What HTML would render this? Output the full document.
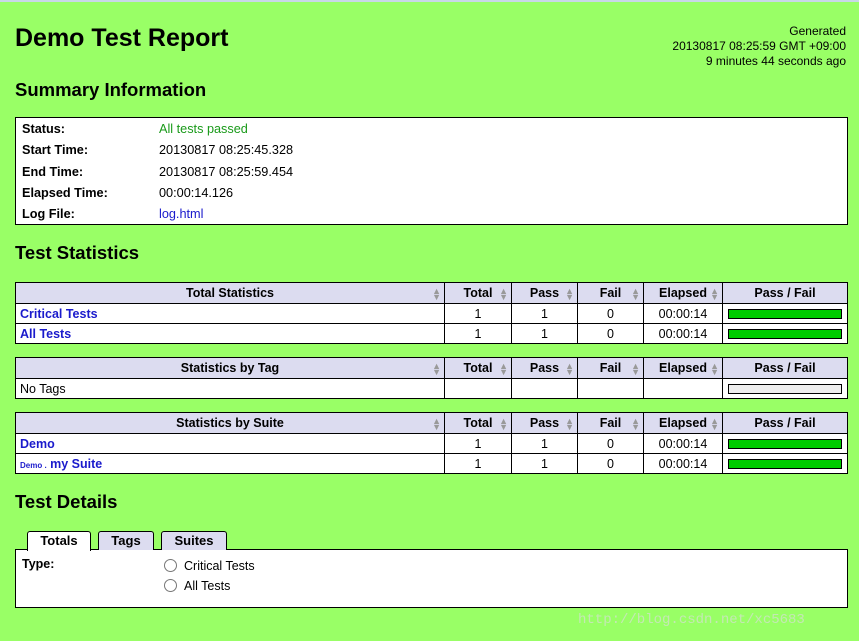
<!DOCTYPE html>
<html><head><meta charset="utf-8"><style>
*{margin:0;padding:0;box-sizing:border-box}
body{width:859px;height:641px;background:#99ff66;font-family:"Liberation Sans",Arial,sans-serif;font-size:12.5px;position:relative;overflow:hidden;color:#000}
.a{position:absolute;white-space:nowrap}
h1{position:absolute;left:15px;top:24px;font-size:25px;font-weight:bold}
h2{position:absolute;left:15px;font-size:18.5px;font-weight:bold}
.box{position:absolute;background:#fff;border:1px solid #000}
table{position:absolute;left:15px;width:833px;border-collapse:collapse;background:#fff}
td,th{border:1px solid #000;height:20px;padding:0 4px;font-size:12.5px}
th{background:#dcdcf0;font-weight:bold;height:21px;position:relative}
td{text-align:center}
td.n{text-align:left;font-weight:bold;color:#1a1acc}
.s{position:absolute;right:3px;top:5px;color:#999;font-size:9px;line-height:6px}
.bar{height:10px;border:1px solid #000;background:#00cc00;margin:0 1px}
.tab{position:absolute;top:531px;height:19px;border:1px solid #000;border-bottom:none;border-radius:3px 3px 0 0;background:#dcdcf0;font-weight:bold;text-align:center;line-height:17px;font-size:13px}
.r{position:absolute;width:13px;height:13px;border:1px solid #777;border-radius:50%;background:#fff}
</style></head><body>
<div class="a" style="left:0;top:0;width:859px;height:2px;background:#c8d8e8"></div>
<h1>Demo Test Report</h1>
<div class="a" style="right:13px;top:24px;text-align:right;line-height:15px;font-size:12px">Generated<br>20130817 08:25:59 GMT +09:00<br>9 minutes 44 seconds ago</div>
<h2 style="top:79px">Summary Information</h2>
<div class="box" style="left:15px;top:117px;width:833px;height:108px"></div>
<div class="a" style="left:22px;top:119px;font-weight:bold;line-height:21.3px;font-size:12.7px">Status:<br>Start Time:<br>End Time:<br>Elapsed Time:<br>Log File:</div>
<div class="a" style="left:159px;top:119px;line-height:21.3px;font-size:12.7px"><span style="color:#1a9a1a">All tests passed</span><br>20130817 08:25:45.328<br>20130817 08:25:59.454<br>00:00:14.126<br><span style="color:#1a1acc">log.html</span></div>
<h2 style="top:242px">Test Statistics</h2>
<table style="top:282px"><colgroup><col style="width:429px"><col style="width:67px"><col style="width:66px"><col style="width:66px"><col style="width:79px"><col></colgroup>
<tr><th>Total Statistics<span class="s">▲<br>▼</span></th><th>Total<span class="s">▲<br>▼</span></th><th>Pass<span class="s">▲<br>▼</span></th><th>Fail<span class="s">▲<br>▼</span></th><th>Elapsed<span class="s">▲<br>▼</span></th><th>Pass / Fail</th></tr>
<tr><td class="n">Critical Tests</td><td>1</td><td>1</td><td>0</td><td>00:00:14</td><td><div class="bar"></div></td></tr>
<tr><td class="n">All Tests</td><td>1</td><td>1</td><td>0</td><td>00:00:14</td><td><div class="bar"></div></td></tr></table>
<table style="top:357px"><colgroup><col style="width:429px"><col style="width:67px"><col style="width:66px"><col style="width:66px"><col style="width:79px"><col></colgroup>
<tr><th>Statistics by Tag<span class="s">▲<br>▼</span></th><th>Total<span class="s">▲<br>▼</span></th><th>Pass<span class="s">▲<br>▼</span></th><th>Fail<span class="s">▲<br>▼</span></th><th>Elapsed<span class="s">▲<br>▼</span></th><th>Pass / Fail</th></tr>
<tr><td style="text-align:left">No Tags</td><td></td><td></td><td></td><td></td><td><div class="bar" style="background:#eee"></div></td></tr></table>
<table style="top:412px"><colgroup><col style="width:429px"><col style="width:67px"><col style="width:66px"><col style="width:66px"><col style="width:79px"><col></colgroup>
<tr><th>Statistics by Suite<span class="s">▲<br>▼</span></th><th>Total<span class="s">▲<br>▼</span></th><th>Pass<span class="s">▲<br>▼</span></th><th>Fail<span class="s">▲<br>▼</span></th><th>Elapsed<span class="s">▲<br>▼</span></th><th>Pass / Fail</th></tr>
<tr><td class="n">Demo</td><td>1</td><td>1</td><td>0</td><td>00:00:14</td><td><div class="bar"></div></td></tr>
<tr><td class="n"><span style="font-size:8px">Demo .</span> my Suite</td><td>1</td><td>1</td><td>0</td><td>00:00:14</td><td><div class="bar"></div></td></tr></table>
<h2 style="top:491px">Test Details</h2>
<div class="box" style="left:15px;top:549px;width:833px;height:59px"></div>
<div class="tab" style="left:27px;width:64px;background:#fff;height:20px;top:531px">Totals</div>
<div class="tab" style="left:98px;width:56px">Tags</div>
<div class="tab" style="left:161px;width:66px">Suites</div>
<div class="a" style="left:22px;top:557px;font-weight:bold">Type:</div>
<div class="r" style="left:164px;top:559px"></div><div class="a" style="left:184px;top:559px">Critical Tests</div>
<div class="r" style="left:164px;top:579px"></div><div class="a" style="left:184px;top:579px">All Tests</div>
<div class="a" style="left:578px;top:612px;color:#c4e8b4;font-family:'Liberation Mono',monospace;font-size:14px">http://blog.csdn.net/xc5683</div>
</body></html>
